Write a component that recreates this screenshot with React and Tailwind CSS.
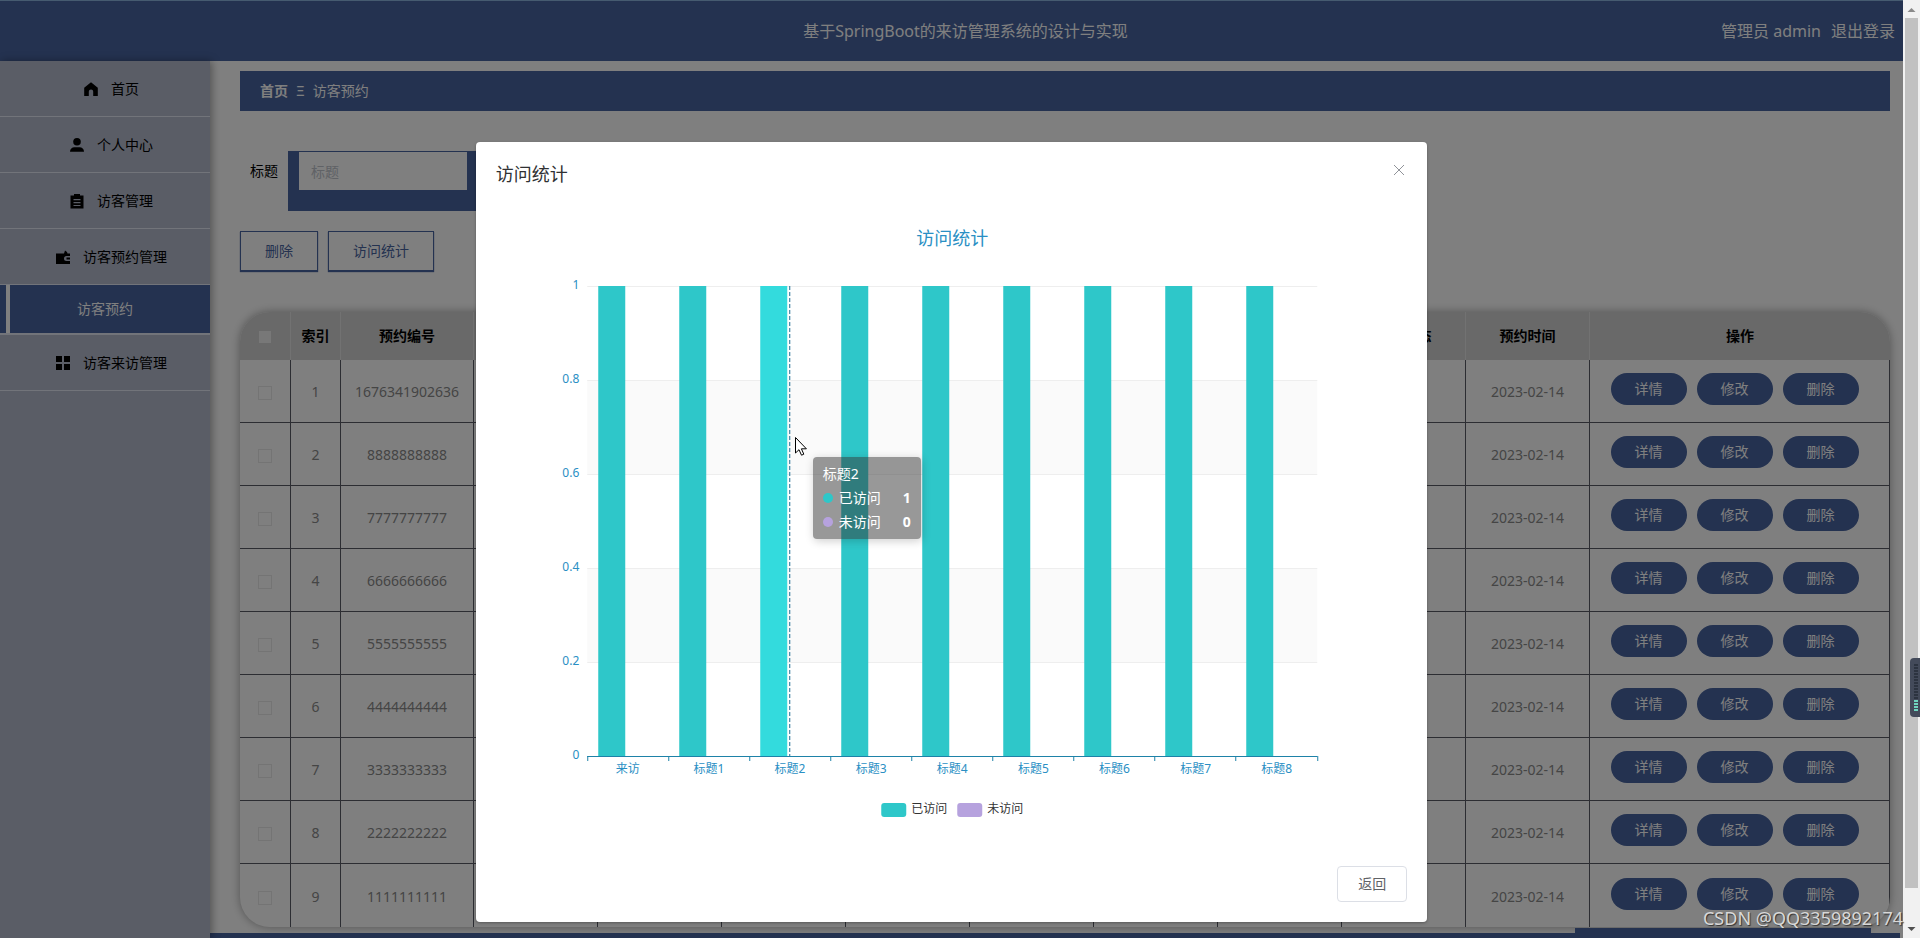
import { useState } from 'react';

const menus = [
  { name: '首页', icon: 'home' },
  { name: '个人中心', icon: 'user' },
  { name: '访客管理', icon: 'order' },
  { name: '访客预约管理', icon: 'wallet', children: ['访客预约'] },
  { name: '访客来访管理', icon: 'grid' },
];

const columns = ['预约编号', '', '', '', '', '', '', '', '审核状态', '预约时间'];

const bookings = [
  '1676341902636',
  '8888888888',
  '7777777777',
  '6666666666',
  '5555555555',
  '4444444444',
  '3333333333',
  '2222222222',
  '1111111111',
];

const stats = [
  { label: '来访', visited: 1 },
  { label: '标题1', visited: 1 },
  { label: '标题2', visited: 1 },
  { label: '标题3', visited: 1 },
  { label: '标题4', visited: 1 },
  { label: '标题5', visited: 1 },
  { label: '标题6', visited: 1 },
  { label: '标题7', visited: 1 },
  { label: '标题8', visited: 1 },
];

const MenuIcon = ({ type }) => (
  <svg viewBox="0 0 16 16" className="w-4 h-4 fill-black" aria-hidden="true">
    {type === 'home' && <path d="M8 1.2 1.2 6.8V15h4.6v-4.4a2.2 2.2 0 0 1 4.4 0V15h4.6V6.8z" />}
    {type === 'user' && (
      <>
        <circle cx="8" cy="4.8" r="3.8" />
        <path d="M1 14.8c0-3 2-4.6 4.4-4.6h5.2c2.4 0 4.4 1.6 4.4 4.6z" />
      </>
    )}
    {type === 'order' && (
      <path
        fillRule="evenodd"
        d="M5 1h6v1.500h3.500V15.500h-13V2.500H5zM4.500 6v1.200h7V6zM4.500 9v1.200h7V9zM4.500 12v1h7v-1z"
      />
    )}
    {type === 'wallet' && (
      <path d="M1 4.500h8l1-3 2 1.500.5 1.500H15V7h-3.500a1.800 1.800 0 0 0 0 5H15v3H1zM11.500 8.500H15v2h-3.500z" />
    )}
    {type === 'grid' && <path d="M1 1h6v6H1zM9 1h6v6H9zM1 9h6v6H1zM9 9h6v6H9z" />}
  </svg>
);

const Header = () => (
  <header className="relative h-[61px] border-t border-[#8cb6e0] bg-[#4864a0] flex items-center justify-end px-2 text-base text-white">
    <h1 className="absolute inset-x-0 pl-7 text-center pointer-events-none">基于SpringBoot的来访管理系统的设计与实现</h1>
    <span>管理员 admin</span>
    <a href="#logout" className="ml-[10px]">退出登录</a>
  </header>
);

const Sidebar = () => (
  <nav className="w-[210px] shrink-0 bg-[#b4bacc] text-sm text-black shadow-[2px_0_8px_rgba(0,0,0,0.35)] z-10">
    {menus.map((menu) => (
      <div key={menu.name}>
        <a
          href="#menu"
          className="h-14 border-b border-[#e4e8f4] flex items-center justify-center gap-3 pl-3"
        >
          <MenuIcon type={menu.icon} />
          {menu.name}
        </a>
        {menu.children?.map((child) => (
          <a
            key={child}
            href="#menu"
            className="h-[50px] pl-[6px] bg-[#4864a0] border-b-2 border-[#e4e8f4] flex text-white"
          >
            <span className="flex-1 border-l-4 border-white flex items-center justify-center pr-[10px]">
              {child}
            </span>
          </a>
        ))}
      </div>
    ))}
  </nav>
);

const SearchForm = () => (
  <form className="mt-10 flex items-start text-sm">
    <label htmlFor="title" className="leading-10 pl-[10px] pr-[10px] text-black">标题</label>
    <div className="w-[280px] h-[60px] bg-[#4864a0] px-[11px] pt-px">
      <input
        id="title"
        type="text"
        placeholder="标题"
        className="w-[168px] h-[38px] bg-white px-3 placeholder:text-[#c0c4cc] outline-none"
      />
    </div>
  </form>
);

const BookingTable = () => (
  <div className="mt-[41px] rounded-[30px] overflow-hidden bg-white shadow-[0_0_10px_rgba(0,0,0,0.35)]">
    <table className="w-full table-fixed border-separate border-spacing-0 text-sm text-center">
      <colgroup>
        <col className="w-[51px]" />
        <col className="w-[50px]" />
        <col className="w-[133px]" />
        {columns.slice(1).map((_, i) => (
          <col key={i} />
        ))}
        <col className="w-[300px]" />
      </colgroup>
      <thead>
        <tr className="h-12 bg-[#d2d2d2] text-black [&>th]:border-r [&>th]:border-[#e4e4e4] [&>th:last-child]:border-r-0">
          <th>
            <input type="checkbox" aria-label="全选" className="appearance-none align-middle w-3 h-3 bg-[#f0f0f0]" />
          </th>
          <th>索引</th>
          {columns.map((name, i) => (
            <th key={i}>{name}</th>
          ))}
          <th>操作</th>
        </tr>
      </thead>
      <tbody>
        {bookings.map((no, i) => (
          <tr
            key={no}
            className="h-[63px] text-[#8a8a8a] [&>td]:pt-[2px] [&>td]:border-r [&>td]:border-b [&>td]:border-[#585b64] last:[&>td]:border-b-0"
          >
            <td>
              <input
                type="checkbox"
                aria-label={`选择 ${no}`}
                className="appearance-none align-middle w-[14px] h-[14px] border border-[#e8e8e8]"
              />
            </td>
            <td>{i + 1}</td>
            <td>{no}</td>
            {columns.slice(2).map((_, j) => (
              <td key={j}></td>
            ))}
            <td>2023-02-14</td>
            <td>
              <div className="flex justify-center gap-[10px] pr-[10px] pb-[6px]">
                {['详情', '修改', '删除'].map((action) => (
                  <button key={action} className="w-[76px] h-8 rounded-full bg-[#4864a0] text-white">
                    {action}
                  </button>
                ))}
              </div>
            </td>
          </tr>
        ))}
      </tbody>
    </table>
  </div>
);

// plot area inside the svg
const LEFT = 91;
const TOP = 58;
const WIDTH = 730;
const HEIGHT = 470;
const STEP = WIDTH / stats.length;

const VisitChart = ({ active }) => (
  <svg viewBox="0 0 911 600" className="w-full h-[600px] overflow-visible" role="img" aria-label="访问统计">
    <text x="456" y="17" textAnchor="middle" fontSize="18" fill="#2a8fc4">访问统计</text>
    {[1, 3].map((n) => (
      <rect key={n} x={LEFT} y={TOP + n * 94} width={WIDTH} height="94" fill="#fafafa" />
    ))}
    {['1', '0.8', '0.6', '0.4', '0.2', '0'].map((tick, i) => (
      <g key={tick}>
        <line x1={LEFT} x2={LEFT + WIDTH} y1={TOP + i * 94 + 0.5} y2={TOP + i * 94 + 0.5} stroke="#eee" />
        <text x={LEFT - 8} y={TOP + i * 94 + 3} textAnchor="end" fontSize="12" fill="#2a8fc4">{tick}</text>
      </g>
    ))}
    {stats.map((item, i) => (
      <g key={item.label}>
        <rect
          x={Math.floor(LEFT + i * STEP + 11)}
          y={TOP + HEIGHT * (1 - item.visited)}
          width="27"
          height={HEIGHT * item.visited}
          fill={i === active ? '#33dbdd' : '#2ec7c9'}
        />
        <text x={LEFT + (i + 0.5) * STEP} y={TOP + HEIGHT + 17} textAnchor="middle" fontSize="12" fill="#2a8fc4">
          {item.label}
        </text>
      </g>
    ))}
    <line
      x1={Math.floor(LEFT + (active + 0.5) * STEP) + 0.5}
      x2={Math.floor(LEFT + (active + 0.5) * STEP) + 0.5}
      y1={TOP}
      y2={TOP + HEIGHT}
      stroke="#1b6a90"
      strokeDasharray="4 2"
    />
    <path
      d={`M${LEFT} ${TOP + HEIGHT + 0.5}h${WIDTH}` +
        [...Array(10)].map((_, i) => `M${Math.floor(LEFT + i * STEP) + 0.5} ${TOP + HEIGHT}v5`).join('')}
      stroke="#1e82a8"
      fill="none"
    />
    <rect x="385" y="575" width="25" height="14" rx="3" fill="#2ec7c9" />
    <text x="415" y="585" fontSize="12" fill="#333">已访问</text>
    <rect x="461" y="575" width="25" height="14" rx="3" fill="#b6a2de" />
    <text x="491" y="585" fontSize="12" fill="#333">未访问</text>
  </svg>
);

const ChartTooltip = () => (
  <div className="absolute left-[337px] top-[249px] w-[108px] h-[82px] rounded bg-[#323232]/50 shadow-[1px_2px_10px_rgba(0,0,0,0.2)] px-[10px] py-[5px] text-sm leading-6 text-white">
    <div>标题2</div>
    <div className="flex items-center">
      <span className="w-[10px] h-[10px] rounded-full bg-[#2ec7c9] mr-[6px]"></span>
      已访问
      <b className="ml-auto">1</b>
    </div>
    <div className="flex items-center">
      <span className="w-[10px] h-[10px] rounded-full bg-[#b6a2de] mr-[6px]"></span>
      未访问
      <b className="ml-auto">0</b>
    </div>
  </div>
);

const StatsDialog = ({ onClose }) => (
  <div className="absolute inset-0 z-20 bg-black/50 flex justify-center items-start">
    <div role="dialog" aria-label="访问统计" className="w-1/2 mt-[142px] rounded-sm bg-white shadow-[0_1px_3px_rgba(0,0,0,0.3)]">
      <div className="h-[66px] px-5 pt-5 flex justify-between items-start">
        <h2 className="text-lg leading-6 text-[#303133]">访问统计</h2>
        <button onClick={onClose} aria-label="关闭" className="p-[2px]">
          <svg viewBox="0 0 12 12" className="w-3 h-3" stroke="#909399" fill="none">
            <path d="M1 1l10 10M11 1L1 11" />
          </svg>
        </button>
      </div>
      <div className="relative px-5 pt-5">
        <VisitChart active={2} />
        <ChartTooltip />
        {/* mouse pointer */}
        <svg viewBox="0 0 12 19" className="absolute left-[319px] top-[229px] w-3 h-[19px]" aria-hidden="true">
          <path d="M.5.5v15.500l3.500-3.300 2.500 5.500 2.300-1-2.400-5.400h5z" fill="#fff" stroke="#000" />
        </svg>
      </div>
      <div className="px-5 pt-[38px] pb-5 flex justify-end">
        <button onClick={onClose} className="w-[70px] h-9 rounded border border-[#dcdfe6] text-sm text-[#606266]">
          返回
        </button>
      </div>
    </div>
  </div>
);

const Scrollbar = () => (
  <div className="relative w-[17px] shrink-0 bg-[#f1f1f1] flex flex-col items-center" aria-hidden="true">
    <svg viewBox="0 0 17 18" className="w-[17px] h-[18px]" fill="#8a8a8a">
      <path d="M4.500 12h8l-4-4z" />
    </svg>
    <div className="w-[13px] h-[870px] bg-[#c1c1c1]"></div>
    <svg viewBox="0 0 17 18" className="mt-auto w-[17px] h-[18px]" fill="#505050">
      <path d="M4.500 7h8l-4 4z" />
    </svg>
    <div className="absolute right-0 top-[658px] w-[10px] h-[59px] rounded-l bg-[#434a5a] pl-1 pt-[6px] flex flex-col gap-px">
      {[...Array(16)].map((_, i) => (
        <i key={i} className={`block w-1 h-[2px] ${i > 11 ? 'bg-[#6fd6c0]' : 'bg-[#2c3340]'}`}></i>
      ))}
    </div>
  </div>
);

export default function App() {
  const [open, setOpen] = useState(true);

  return (
    <div className="relative flex h-screen overflow-hidden bg-white font-['Noto_Sans','Noto_Sans_CJK_SC',sans-serif]">
      <div className="relative flex-1 min-w-0 flex flex-col overflow-hidden">
        <Header />
        <div className="flex flex-1 min-h-0">
          <Sidebar />
          <main className="flex-1 min-w-0 pt-[10px]">
            <div className="ml-[30px] mr-[13px]">
              <div className="h-10 bg-[#4864a0] px-5 flex items-center gap-2 text-sm text-white">
                <b>首页</b>
                <span>Ξ</span>
                <span>访客预约</span>
              </div>
              <SearchForm />
              <div className="mt-5 flex gap-[10px] text-sm text-[#4864a0]">
                <button className="w-[78px] h-10 border border-[#4864a0] shadow-[0_1px_1px_#4864a0]">删除</button>
                <button
                  onClick={() => setOpen(true)}
                  className="w-[106px] h-10 border border-[#4864a0] shadow-[0_1px_1px_#4864a0]"
                >
                  访问统计
                </button>
              </div>
              <BookingTable />
            </div>
            <div className="relative mt-[6px] mr-[3px] h-10 bg-[#4864a0]">
              <div className="absolute right-[29px] bottom-full w-[296px] h-[5px] bg-[#4864a0]"></div>
            </div>
          </main>
        </div>
        {open && <StatsDialog onClose={() => setOpen(false)} />}
      </div>
      <Scrollbar />
      <div className="absolute right-[17px] bottom-[6px] z-30 text-lg text-[#d8d8d8] [text-shadow:1px_1px_1px_#333]">
        CSDN @QQ3359892174
      </div>
    </div>
  );
}
